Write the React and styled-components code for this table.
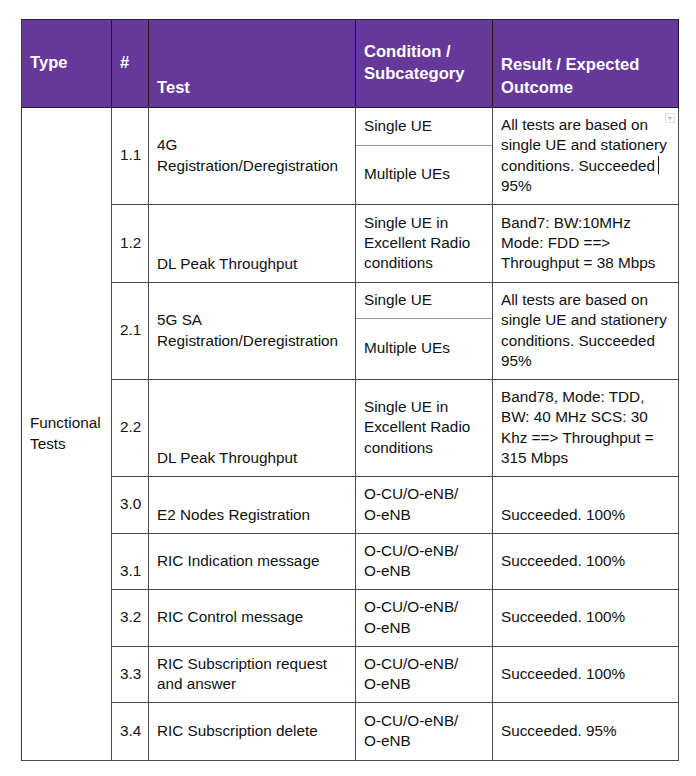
import styled, { createGlobalStyle } from 'styled-components';

const GlobalStyle = createGlobalStyle`
    html, body {
        margin: 0;
        padding: 0;
        background: #ffffff;
    }
    body {
        font-family: "Liberation Sans", Arial, sans-serif;
        color: #111111;
    }
`;

const Page = styled.div`
    padding: 19px 0 0 21px;
`;

const Grid = styled.div`
    display: grid;
    width: max-content;
    grid-template-columns: 90px 37px 207px 137px 186px;
    grid-template-rows: 88px 38px 59px 78px 36px 61px 97px 57px 56px 57px 56px 58px;
    border-top: 1px solid #2a2a3a;
    border-left: 1px solid #3a3a3a;
`;

const justify = {
    top: 'flex-start',
    middle: 'center',
    bottom: 'flex-end',
};

const Cell = styled.div`
    position: relative;
    box-sizing: border-box;
    display: flex;
    flex-direction: column;
    justify-content: ${props => justify[props.$v || 'middle']};
    grid-column: ${props => props.$col};
    grid-row: ${props => props.$row} / span ${props => props.$span || 1};
    padding: 7px 7px 8px 8px;
    border-right: 1px solid #4a4a4a;
    border-bottom: 1px solid ${props => (props.$light ? '#9a9a9a' : '#4a4a4a')};
    font-size: 15.3px;
    line-height: 20.2px;
`;

const HeadCell = styled(Cell)`
    background: #66389a;
    color: #ffffff;
    font-weight: bold;
    font-size: 16.6px;
    line-height: 22.5px;
    border-right-color: #1e1a2a;
    border-bottom-color: #1e1a2a;
`;

const Line = styled.div`
    white-space: nowrap;
`;

const Caret = styled.span`
    display: inline-block;
    width: 1.5px;
    height: 18px;
    margin-left: 3px;
    vertical-align: -3px;
    background: #111111;
`;

const DropHandle = styled.span`
    position: absolute;
    top: 5px;
    right: 3px;
    width: 10px;
    height: 10px;
    box-sizing: border-box;
    border: 1px solid #e2e2e2;
    background: #fafafa;
    &::after {
        content: '';
        position: absolute;
        left: 2px;
        top: 3px;
        border-left: 2.5px solid transparent;
        border-right: 2.5px solid transparent;
        border-top: 3px solid #b8b8b8;
    }
`;

const headers = [
    { text: 'Type', v: 'middle' },
    { text: '#', v: 'middle' },
    { text: 'Test', v: 'bottom' },
    { text: 'Condition / Subcategory', v: 'middle' },
    { text: 'Result / Expected Outcome', v: 'bottom' },
];

const nodes = ['O-CU/O-eNB/', 'O-eNB'];

// cells for the body: col, row, span, vertical align, text (string or lines)
const body = [
    { col: 1, row: 2, span: 11, v: 'middle', text: 'Functional Tests' },

    { col: 2, row: 2, span: 2, text: '1.1' },
    { col: 3, row: 2, span: 2, text: '4G Registration/Deregistration' },
    { col: 4, row: 2, text: 'Single UE', light: true },
    { col: 4, row: 3, text: 'Multiple UEs' },

    { col: 2, row: 4, text: '1.2' },
    { col: 3, row: 4, v: 'bottom', text: 'DL Peak Throughput' },
    { col: 4, row: 4, text: 'Single UE in Excellent Radio conditions' },
    { col: 5, row: 4, text: 'Band7: BW:10MHz Mode: FDD ==> Throughput = 38 Mbps' },

    { col: 2, row: 5, span: 2, text: '2.1' },
    { col: 3, row: 5, span: 2, text: '5G SA Registration/Deregistration' },
    { col: 4, row: 5, text: 'Single UE', light: true },
    { col: 4, row: 6, text: 'Multiple UEs' },
    { col: 5, row: 5, span: 2, text: 'All tests are based on single UE and stationery conditions. Succeeded 95%' },

    { col: 2, row: 7, text: '2.2' },
    { col: 3, row: 7, v: 'bottom', text: 'DL Peak Throughput' },
    { col: 4, row: 7, text: 'Single UE in Excellent Radio conditions' },
    { col: 5, row: 7, text: 'Band78, Mode: TDD, BW: 40 MHz SCS: 30 Khz ==> Throughput = 315 Mbps' },

    { col: 2, row: 8, text: '3.0' },
    { col: 3, row: 8, v: 'bottom', text: 'E2 Nodes Registration' },
    { col: 4, row: 8, text: nodes },
    { col: 5, row: 8, v: 'bottom', text: 'Succeeded. 100%' },

    { col: 2, row: 9, v: 'bottom', text: '3.1' },
    { col: 3, row: 9, text: 'RIC Indication message' },
    { col: 4, row: 9, text: nodes },
    { col: 5, row: 9, text: 'Succeeded. 100%' },

    { col: 2, row: 10, text: '3.2' },
    { col: 3, row: 10, text: 'RIC Control message' },
    { col: 4, row: 10, text: nodes },
    { col: 5, row: 10, text: 'Succeeded. 100%' },

    { col: 2, row: 11, text: '3.3' },
    { col: 3, row: 11, text: 'RIC Subscription request and answer' },
    { col: 4, row: 11, text: nodes },
    { col: 5, row: 11, text: 'Succeeded. 100%' },

    { col: 2, row: 12, text: '3.4' },
    { col: 3, row: 12, text: 'RIC Subscription delete' },
    { col: 4, row: 12, text: nodes },
    { col: 5, row: 12, text: 'Succeeded. 95%' },
];

const CellText = ({ text }) =>
    Array.isArray(text) ? (
        <div>
            {text.map(line => (
                <Line key={line}>{line}</Line>
            ))}
        </div>
    ) : (
        <div>{text}</div>
    );

function App() {
    return (
        <Page>
            <GlobalStyle />
            <Grid>
                {headers.map((h, i) => (
                    <HeadCell key={h.text} $col={i + 1} $row={1} $v={h.v}>
                        <div>{h.text}</div>
                    </HeadCell>
                ))}
                <Cell $col={5} $row={2} $span={2}>
                    <DropHandle />
                    <div>
                        All tests are based on single UE and stationery
                        conditions. Succeeded
                        <Caret /> 95%
                    </div>
                </Cell>
                {body.map(c => (
                    <Cell
                        key={`${c.col}-${c.row}`}
                        $col={c.col}
                        $row={c.row}
                        $span={c.span}
                        $v={c.v}
                        $light={c.light}
                    >
                        <CellText text={c.text} />
                    </Cell>
                ))}
            </Grid>
        </Page>
    );
}

export default App;
